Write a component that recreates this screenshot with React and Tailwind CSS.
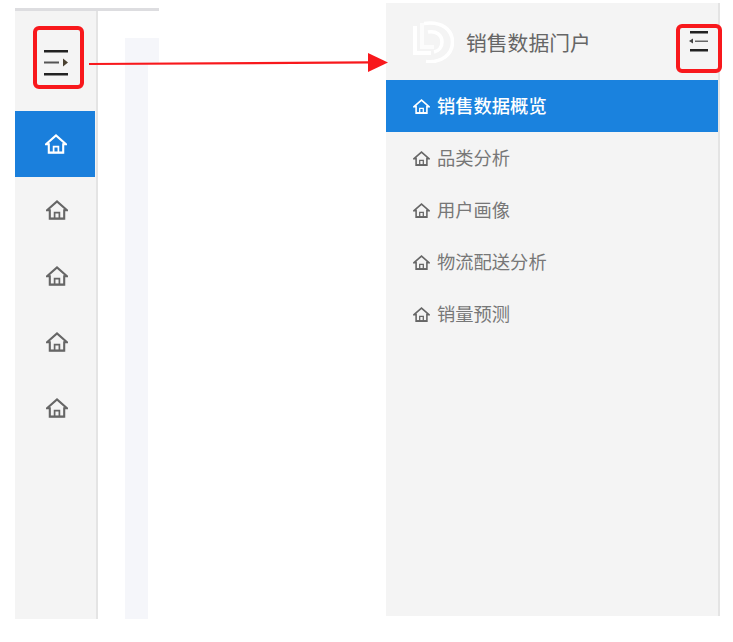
import React from 'react';

const FONT = "font-['Liberation_Sans','Noto_Sans_CJK_SC',sans-serif]";

const menuItems = ['销售数据概览', '品类分析', '用户画像', '物流配送分析', '销量预测'];

// Haus-Icon aus dem Menü
const HomeIcon = ({ className }) => (
  <svg viewBox="0 0 22 20" fill="none" stroke="currentColor" strokeWidth="2.1" strokeLinejoin="miter" className={className}>
    <path d="M1 10.2 L11 1.4 L21 10.2 H18.2 V18.8 H3.8 V10.2 Z" />
    <path d="M8.6 18.8 V12.6 H13.4 V18.8" strokeWidth="1.7" />
    <path d="M4 18.4 H18" strokeWidth="1.6" />
  </svg>
);

// Logo: weißes L und D
const Logo = () => (
  <svg viewBox="0 0 42 42" fill="none" className="w-[42px] h-[42px] shrink-0">
    <path d="M12 2.5 C 30 0, 40.5 9, 40.5 21 C 40.5 33, 30 42, 14 40.5" stroke="#ffffff" strokeWidth="3.6" />
    <path d="M1 5 H5 V30 H19 V34 H1 Z" fill="#ffffff" />
    <path d="M8 2 H12 V24 H22 V28 H8 Z" fill="#ffffff" fillOpacity="0.75" />
    <path d="M16 11 C 24 9.5, 30 14, 30 21 C 30 26, 27 30, 22 31" stroke="#ffffff" strokeWidth="3.6" />
  </svg>
);

// Schmale, eingeklappte Seitenleiste
const CollapsedSidebar = () => (
  <div className="w-[144px] h-[611px] mt-[8px] ml-[15px] shrink-0 flex flex-col">
    <div className="h-[3px] bg-[#dddde0]" />
    <div className="flex flex-1">
      <div className="w-[83px] bg-[#f4f4f4] border-r-2 border-[#e4e4e4] flex flex-col">
        <div className="h-[100px] flex items-center pl-[29px] pt-[3px]">
          <svg width="25" height="26" viewBox="0 0 25 26">
            <rect x="0" y="0" width="24" height="2.5" fill="#222222" />
            <rect x="0" y="11.5" width="15" height="2" fill="#555555" />
            <path d="M19 8.5 L24 12.5 L19 16.5 Z" fill="#4a4030" />
            <rect x="0" y="23" width="24" height="2.5" fill="#222222" />
          </svg>
        </div>
        <div className="h-[66px] mr-[1px] bg-[#1a7fdc] flex items-center justify-center pl-[2px] text-white">
          <HomeIcon className="w-[22px] h-[20px]" />
        </div>
        {[0, 1, 2, 3].map((i) => (
          <div key={i} className="h-[66px] flex items-center justify-center pl-[2px] text-[#666666]">
            <HomeIcon className="w-[22px] h-[20px]" />
          </div>
        ))}
      </div>
      <div className="flex-1 pt-[27px] pl-[27px] flex flex-col">
        <div className="h-[25px] bg-[#f5f6fa]" />
        <div className="flex-1 w-[23px] bg-[#f5f6fa]" />
      </div>
    </div>
  </div>
);

// Aufgeklappte Seitenleiste
const ExpandedSidebar = () => (
  <div className={`w-[334px] h-[613px] mt-[3px] ml-[227px] shrink-0 bg-[#f4f4f4] border-r-2 border-[#e4e4e4] flex flex-col ${FONT}`}>
    <div className="h-[77px] flex items-center pl-[26px]">
      <Logo />
      <span className="ml-[12px] mt-[5px] text-[20.8px] text-[#666666] leading-none">销售数据门户</span>
      <svg width="20" height="21" viewBox="0 0 20 21" className="ml-auto mr-[9px] mb-[1px]">
        <rect x="1" y="0" width="18" height="2.5" fill="#222222" />
        <rect x="6" y="9.5" width="13" height="1.5" fill="#666666" />
        <path d="M0 10 L4 7.5 V12.5 Z" fill="#444444" />
        <rect x="1" y="18" width="18" height="2.5" fill="#222222" />
      </svg>
    </div>
    {menuItems.map((item, i) => (
      <div
        key={item}
        className={`h-[52px] flex items-center pl-[27px] text-[18.3px] ${i === 0 ? 'bg-[#1a82de] text-white font-medium' : 'text-[#777777]'}`}
      >
        <HomeIcon className={`w-[17px] h-[15px] mr-[7px] shrink-0 ${i === 0 ? 'text-white' : 'text-[#666666]'}`} />
        <span className="pt-[1px]">{item}</span>
      </div>
    ))}
  </div>
);

const App = () => {
  return (
    <div className="relative w-[733px] h-[642px] bg-white flex items-start overflow-hidden">
      <CollapsedSidebar />
      <ExpandedSidebar />

      {/* Rote Markierungen über dem Bild */}
      <div className="absolute left-[33px] top-[26px] w-[51px] h-[63px] border-[4px] border-[#f8181c] rounded-[6px]" />
      <div className="absolute left-[676px] top-[24px] w-[46px] h-[49px] border-[4px] border-[#f8181c] rounded-[6px]" />
      <svg className="absolute left-[88px] top-[50px]" width="302" height="24" viewBox="0 0 302 24">
        <path d="M1 14 L282 12.4" stroke="#f8181c" strokeWidth="2.2" />
        <path d="M280 3 L300 12.5 L280 22 Z" fill="#f8181c" />
      </svg>
    </div>
  );
};

export default App;
